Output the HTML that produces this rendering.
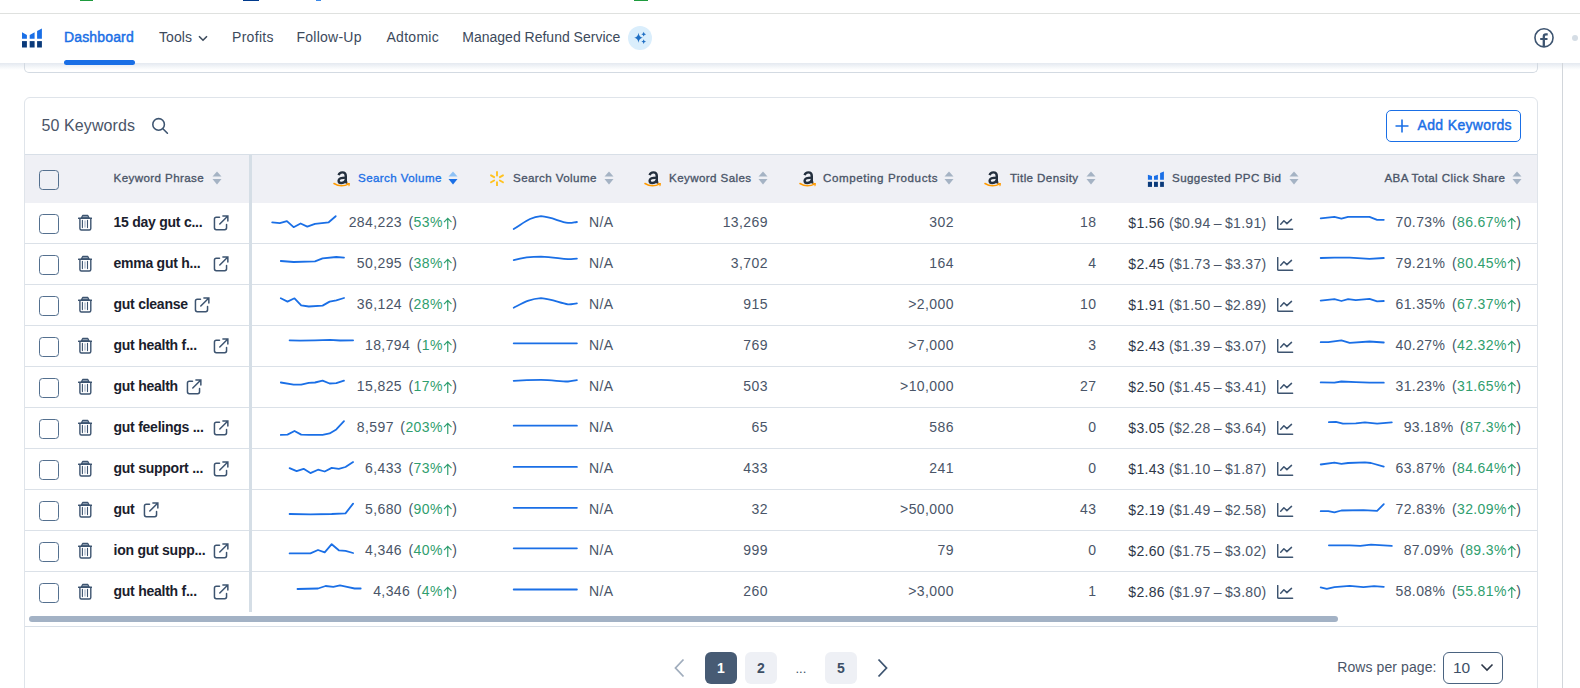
<!DOCTYPE html>
<html><head><meta charset="utf-8"><style>
html,body{margin:0;padding:0;background:#fff;}
body{width:1580px;height:688px;overflow:hidden;position:relative;font-family:"Liberation Sans", sans-serif;}
.t{position:absolute;white-space:nowrap;}
.a{position:absolute;}
</style></head><body>

<div class="a" style="left:0;top:13px;width:1580px;height:1px;background:#dfe1df"></div>
<div class="a" style="left:80px;top:0;width:13px;height:1px;background:#1e9b3e"></div>
<div class="a" style="left:243px;top:0;width:16px;height:1px;background:#003a8c"></div>
<div class="a" style="left:316px;top:0;width:5px;height:1px;background:#3a88e8"></div>
<div class="a" style="left:634px;top:0;width:14px;height:1px;background:#1e9b3e"></div>
<div class="a" style="left:0;top:63px;width:1580px;height:7px;background:linear-gradient(#e4e9f0,#f7f9fb 70%,#fff)"></div>
<div class="a" style="left:24px;top:56px;width:1512px;height:16px;border:1px solid #d3dae2;border-top:none;border-radius:0 0 5px 5px"></div>
<div class="a" style="left:0;top:14px;width:1580px;height:49px;background:#fff"></div>
<div class="a" style="left:1562px;top:63px;width:1px;height:625px;background:#d2d6db"></div>
<svg class="a" style="left:22px;top:28px" width="21" height="20" viewBox="0 0 21 20">
<path d="M0,4.2 L4.9,7 L4.9,10.8 L0,10.8Z M7.7,7 L12.6,4.2 L12.6,10.8 L7.7,10.8Z M15.1,2.9 L19.9,0.6 L19.9,10.8 L15.1,10.8Z" fill="#1a6fe6"/>
<rect x="0" y="13.1" width="4.9" height="6.4" fill="#0a3a7a"/><rect x="7.7" y="13.1" width="4.9" height="6.4" fill="#0a3a7a"/><rect x="15.1" y="13.1" width="4.8" height="6.4" fill="#0a3a7a"/>
</svg>
<div class="t" style="left:64px;top:30.35px;font-size:14px;line-height:14px;color:#1a6fe6;font-weight:400;letter-spacing:0.15px;-webkit-text-stroke:0.45px #1a6fe6;">Dashboard</div>
<div class="a" style="left:64px;top:60px;width:71px;height:5px;border-radius:3px;background:#1a6fe6"></div>
<div class="t" style="left:159px;top:30.35px;font-size:14px;line-height:14px;color:#3c4a5c;font-weight:400;letter-spacing:0.1px;">Tools</div>
<svg class="a" style="left:198px;top:35px" width="10" height="7" viewBox="0 0 10 7"><path d="M1,1.2 L5,5.2 L9,1.2" fill="none" stroke="#3c4a5c" stroke-width="1.6"/></svg>
<div class="t" style="left:232px;top:30.35px;font-size:14px;line-height:14px;color:#3c4a5c;font-weight:400;letter-spacing:0.3px;">Profits</div>
<div class="t" style="left:296.5px;top:30.35px;font-size:14px;line-height:14px;color:#3c4a5c;font-weight:400;letter-spacing:0.25px;">Follow-Up</div>
<div class="t" style="left:386.5px;top:30.35px;font-size:14px;line-height:14px;color:#3c4a5c;font-weight:400;letter-spacing:0.28px;">Adtomic</div>
<div class="t" style="left:462.3px;top:30.35px;font-size:14px;line-height:14px;color:#3c4a5c;font-weight:400;">Managed Refund Service</div>
<div class="a" style="left:628px;top:26px;width:24px;height:24px;border-radius:12px;background:#daeefc"></div>
<svg class="a" style="left:628px;top:26px" width="24" height="24" viewBox="0 0 24 24">
<path d="M10.5,6.8 Q11.1,11.1 14.8,11.8 Q11.1,12.5 10.5,16.8 Q9.9,12.5 6.2,11.8 Q9.9,11.1 10.5,6.8Z" fill="#1f6fc4"/>
<path d="M15.7,5.8 Q16,7.9 18.1,8.2 Q16,8.5 15.7,10.6 Q15.4,8.5 13.3,8.2 Q15.4,7.9 15.7,5.8Z" fill="#1f6fc4"/>
<path d="M15.7,13.2 Q16,15.3 18.1,15.6 Q16,15.9 15.7,18 Q15.4,15.9 13.3,15.6 Q15.4,15.3 15.7,13.2Z" fill="#1f6fc4"/>
</svg>
<svg class="a" style="left:1533px;top:27px" width="22" height="22" viewBox="0 0 22 22">
<circle cx="11" cy="10.8" r="9.05" fill="none" stroke="#3d5470" stroke-width="1.6"/>
<path d="M10.8,20 L10.8,9.4 Q10.8,7.3 12.9,7.3 L14.7,7.3" fill="none" stroke="#3d5470" stroke-width="2.3"/>
<path d="M7.2,12 L14.5,12" stroke="#3d5470" stroke-width="2"/>
</svg>
<div class="a" style="left:1572px;top:35px;width:6px;height:6px;border-radius:3px;background:#d5dde5"></div>
<div class="a" style="left:24px;top:97px;width:1512px;height:620px;border:1px solid #dfe4ea;border-radius:6px"></div>
<div class="t" style="left:41.5px;top:118.26px;font-size:16px;line-height:16px;color:#4a5568;font-weight:400;letter-spacing:0.1px;">50 Keywords</div>
<svg class="a" style="left:150px;top:116px" width="20" height="20" viewBox="0 0 20 20">
<circle cx="8.6" cy="8.4" r="5.8" fill="none" stroke="#3d5470" stroke-width="1.55"/>
<path d="M12.9,12.7 L17.4,17.2" stroke="#3d5470" stroke-width="1.6" stroke-linecap="round"/>
</svg>
<div class="a" style="left:1386px;top:110px;width:133px;height:30px;border:1px solid #1a6fe6;border-radius:5px"></div>
<svg class="a" style="left:1395px;top:119px" width="14" height="14" viewBox="0 0 14 14"><path d="M7,0.5 L7,13.5 M0.5,7 L13.5,7" stroke="#1a6fe6" stroke-width="1.6"/></svg>
<div class="t" style="left:1417.5px;top:118.05px;font-size:14px;line-height:14px;color:#1a6fe6;font-weight:400;letter-spacing:0.35px;-webkit-text-stroke:0.45px currentColor;">Add Keywords</div>
<div class="a" style="left:25px;top:154px;width:1512px;height:1px;background:#d8dfe7"></div>
<div class="a" style="left:25px;top:155px;width:1512px;height:48px;background:#eff0f5"></div>
<div class="a" style="left:25px;top:243px;width:1512px;height:1px;background:#dbe1e8"></div>
<div class="a" style="left:25px;top:284px;width:1512px;height:1px;background:#dbe1e8"></div>
<div class="a" style="left:25px;top:325px;width:1512px;height:1px;background:#dbe1e8"></div>
<div class="a" style="left:25px;top:366px;width:1512px;height:1px;background:#dbe1e8"></div>
<div class="a" style="left:25px;top:407px;width:1512px;height:1px;background:#dbe1e8"></div>
<div class="a" style="left:25px;top:448px;width:1512px;height:1px;background:#dbe1e8"></div>
<div class="a" style="left:25px;top:489px;width:1512px;height:1px;background:#dbe1e8"></div>
<div class="a" style="left:25px;top:530px;width:1512px;height:1px;background:#dbe1e8"></div>
<div class="a" style="left:25px;top:571px;width:1512px;height:1px;background:#dbe1e8"></div>
<div class="a" style="left:249px;top:155px;width:3px;height:457px;background:#d5dee6"></div>
<div class="a" style="left:39px;top:170px;width:18px;height:18px;border:1.2px solid #54708f;border-radius:3.6px;box-sizing:content-box"></div>
<div class="t" style="left:113.5px;top:171.88px;font-size:11.6px;line-height:11.6px;color:#4a5568;font-weight:400;letter-spacing:0.4px;-webkit-text-stroke:0.32px currentColor;">Keyword Phrase</div>
<svg class="a" style="left:212px;top:171px" width="10" height="14" viewBox="0 0 10 14"><path d="M5,0.5 L9.5,5.5 L0.5,5.5Z" fill="#a5b3c4"/><path d="M5,13.5 L9.5,8 L0.5,8Z" fill="#a5b3c4"/></svg>
<svg class="a" style="left:333px;top:170px" width="18" height="19" viewBox="0 0 18 19">
<g transform="translate(1,0)">
<path d="M4.6,5.2 Q5.4,2.4 8.4,2.4 Q11.8,2.4 11.8,5.9 L11.8,11.2 Q11.8,12.6 13.3,12.9" fill="none" stroke="#232f3e" stroke-width="2.4"/>
<path d="M11.8,7.6 Q4.6,7.6 4.6,10.7 Q4.6,13 7.2,13 Q10.2,13 11.8,10.4" fill="none" stroke="#232f3e" stroke-width="2.4"/>
</g>
<path d="M1,13.5 Q8,18 16,13.8" fill="none" stroke="#ff9a00" stroke-width="1.5" stroke-linecap="round"/>
<path d="M14,13.3 L16.3,13.6 L16,15.8" fill="none" stroke="#ff9a00" stroke-width="1.1" stroke-linecap="round"/>
</svg>
<div class="t" style="left:358px;top:171.88px;font-size:11.6px;line-height:11.6px;color:#1a6fe6;font-weight:400;letter-spacing:0.4px;-webkit-text-stroke:0.32px currentColor;">Search Volume</div>
<svg class="a" style="left:448px;top:171px" width="10" height="14" viewBox="0 0 10 14"><path d="M5,0.5 L9.5,5.5 L0.5,5.5Z" fill="#8ec1f5"/><path d="M5,13.5 L9.5,8 L0.5,8Z" fill="#1a6fe6"/></svg>
<svg class="a" style="left:489px;top:170px" width="16" height="16" viewBox="0 0 16 16">
<g stroke="#ffc220" stroke-width="1.9" stroke-linecap="round">
<path d="M8,1.9 L8,5.5"/><path d="M8,12.1 L8,15.7"/>
<path d="M2.02,5.35 L5.14,7.15"/><path d="M10.86,10.45 L13.98,12.25"/>
<path d="M2.02,12.25 L5.14,10.45"/><path d="M10.86,7.15 L13.98,5.35"/>
</g></svg>
<div class="t" style="left:513px;top:171.88px;font-size:11.6px;line-height:11.6px;color:#4a5568;font-weight:400;letter-spacing:0.4px;-webkit-text-stroke:0.32px currentColor;">Search Volume</div>
<svg class="a" style="left:604px;top:171px" width="10" height="14" viewBox="0 0 10 14"><path d="M5,0.5 L9.5,5.5 L0.5,5.5Z" fill="#a5b3c4"/><path d="M5,13.5 L9.5,8 L0.5,8Z" fill="#a5b3c4"/></svg>
<svg class="a" style="left:644px;top:170px" width="18" height="19" viewBox="0 0 18 19">
<g transform="translate(1,0)">
<path d="M4.6,5.2 Q5.4,2.4 8.4,2.4 Q11.8,2.4 11.8,5.9 L11.8,11.2 Q11.8,12.6 13.3,12.9" fill="none" stroke="#232f3e" stroke-width="2.4"/>
<path d="M11.8,7.6 Q4.6,7.6 4.6,10.7 Q4.6,13 7.2,13 Q10.2,13 11.8,10.4" fill="none" stroke="#232f3e" stroke-width="2.4"/>
</g>
<path d="M1,13.5 Q8,18 16,13.8" fill="none" stroke="#ff9a00" stroke-width="1.5" stroke-linecap="round"/>
<path d="M14,13.3 L16.3,13.6 L16,15.8" fill="none" stroke="#ff9a00" stroke-width="1.1" stroke-linecap="round"/>
</svg>
<div class="t" style="left:669px;top:171.88px;font-size:11.6px;line-height:11.6px;color:#4a5568;font-weight:400;letter-spacing:0.4px;-webkit-text-stroke:0.32px currentColor;">Keyword Sales</div>
<svg class="a" style="left:758px;top:171px" width="10" height="14" viewBox="0 0 10 14"><path d="M5,0.5 L9.5,5.5 L0.5,5.5Z" fill="#a5b3c4"/><path d="M5,13.5 L9.5,8 L0.5,8Z" fill="#a5b3c4"/></svg>
<svg class="a" style="left:799px;top:170px" width="18" height="19" viewBox="0 0 18 19">
<g transform="translate(1,0)">
<path d="M4.6,5.2 Q5.4,2.4 8.4,2.4 Q11.8,2.4 11.8,5.9 L11.8,11.2 Q11.8,12.6 13.3,12.9" fill="none" stroke="#232f3e" stroke-width="2.4"/>
<path d="M11.8,7.6 Q4.6,7.6 4.6,10.7 Q4.6,13 7.2,13 Q10.2,13 11.8,10.4" fill="none" stroke="#232f3e" stroke-width="2.4"/>
</g>
<path d="M1,13.5 Q8,18 16,13.8" fill="none" stroke="#ff9a00" stroke-width="1.5" stroke-linecap="round"/>
<path d="M14,13.3 L16.3,13.6 L16,15.8" fill="none" stroke="#ff9a00" stroke-width="1.1" stroke-linecap="round"/>
</svg>
<div class="t" style="left:823px;top:171.88px;font-size:11.6px;line-height:11.6px;color:#4a5568;font-weight:400;letter-spacing:0.56px;-webkit-text-stroke:0.32px currentColor;">Competing Products</div>
<svg class="a" style="left:944px;top:171px" width="10" height="14" viewBox="0 0 10 14"><path d="M5,0.5 L9.5,5.5 L0.5,5.5Z" fill="#a5b3c4"/><path d="M5,13.5 L9.5,8 L0.5,8Z" fill="#a5b3c4"/></svg>
<svg class="a" style="left:984px;top:170px" width="18" height="19" viewBox="0 0 18 19">
<g transform="translate(1,0)">
<path d="M4.6,5.2 Q5.4,2.4 8.4,2.4 Q11.8,2.4 11.8,5.9 L11.8,11.2 Q11.8,12.6 13.3,12.9" fill="none" stroke="#232f3e" stroke-width="2.4"/>
<path d="M11.8,7.6 Q4.6,7.6 4.6,10.7 Q4.6,13 7.2,13 Q10.2,13 11.8,10.4" fill="none" stroke="#232f3e" stroke-width="2.4"/>
</g>
<path d="M1,13.5 Q8,18 16,13.8" fill="none" stroke="#ff9a00" stroke-width="1.5" stroke-linecap="round"/>
<path d="M14,13.3 L16.3,13.6 L16,15.8" fill="none" stroke="#ff9a00" stroke-width="1.1" stroke-linecap="round"/>
</svg>
<div class="t" style="left:1010px;top:171.88px;font-size:11.6px;line-height:11.6px;color:#4a5568;font-weight:400;letter-spacing:0.4px;-webkit-text-stroke:0.32px currentColor;">Title Density</div>
<svg class="a" style="left:1086px;top:171px" width="10" height="14" viewBox="0 0 10 14"><path d="M5,0.5 L9.5,5.5 L0.5,5.5Z" fill="#a5b3c4"/><path d="M5,13.5 L9.5,8 L0.5,8Z" fill="#a5b3c4"/></svg>
<svg class="a" style="left:1147px;top:171px" width="18" height="17" viewBox="0 0 18 17">
<path d="M0.9,3.8 L5,5.1 L5,8.7 L0.9,8.7Z M7,5.1 L10.9,3.8 L10.9,8.7 L7,8.7Z M13.1,2.1 L16.9,0.6 L16.9,8.7 L13.1,8.7Z" fill="#1a6fe6"/>
<rect x="0.9" y="10.8" width="4.1" height="5.1" fill="#0a3a7a"/><rect x="7" y="10.8" width="3.9" height="5.1" fill="#0a3a7a"/><rect x="13.1" y="10.8" width="3.8" height="5.1" fill="#0a3a7a"/>
</svg>
<div class="t" style="left:1172px;top:171.88px;font-size:11.6px;line-height:11.6px;color:#4a5568;font-weight:400;letter-spacing:0.4px;-webkit-text-stroke:0.32px currentColor;">Suggested PPC Bid</div>
<svg class="a" style="left:1289px;top:171px" width="10" height="14" viewBox="0 0 10 14"><path d="M5,0.5 L9.5,5.5 L0.5,5.5Z" fill="#a5b3c4"/><path d="M5,13.5 L9.5,8 L0.5,8Z" fill="#a5b3c4"/></svg>
<div class="t" style="right:74.59999999999991px;text-align:right;top:171.88px;font-size:11.6px;line-height:11.6px;color:#4a5568;font-weight:400;letter-spacing:0.4px;-webkit-text-stroke:0.32px currentColor;">ABA Total Click Share</div>
<svg class="a" style="left:1512px;top:171px" width="10" height="14" viewBox="0 0 10 14"><path d="M5,0.5 L9.5,5.5 L0.5,5.5Z" fill="#a5b3c4"/><path d="M5,13.5 L9.5,8 L0.5,8Z" fill="#a5b3c4"/></svg>
<div class="a" style="left:39px;top:214px;width:18px;height:18px;border:1.2px solid #54708f;border-radius:3.6px;box-sizing:content-box"></div>
<svg class="a" style="left:78px;top:214px" width="14" height="18" viewBox="0 0 14 18">
<path d="M3.3,4 L4.7,1.5 L9.8,1.5 L11.1,4Z" fill="#a9b6c6" stroke="#3d5470" stroke-width="1.3" stroke-linejoin="round"/>
<path d="M0.6,4.3 L13.6,4.3" stroke="#3d5470" stroke-width="1.5" stroke-linecap="round"/>
<path d="M1.9,4.6 L1.9,14.5 Q1.9,16 3.4,16 L11.3,16 Q12.8,16 12.8,14.5 L12.8,4.6" fill="none" stroke="#3d5470" stroke-width="1.4"/>
<path d="M4.4,6.3 L4.4,13.6 M9.5,6.3 L9.5,13.6" stroke="#3d5470" stroke-width="1.1" stroke-linecap="round"/>
<path d="M7,6.4 L7,13.6" stroke="#a9b6c6" stroke-width="1.2"/>
</svg>
<div class="t" style="left:113.5px;top:215.15px;font-size:14px;line-height:14px;color:#1a202c;font-weight:700;letter-spacing:-0.25px;">15 day gut c...</div>
<svg class="a" style="left:213px;top:215px" width="17" height="17" viewBox="0 0 17 17">
<path d="M6.5,2.15 L3.3,2.15 Q1.45,2.15 1.45,4 L1.45,12.8 Q1.45,14.65 3.3,14.65 L11.7,14.65 Q13.55,14.65 13.55,12.8 L13.55,9.5" fill="none" stroke="#3d5470" stroke-width="1.5" stroke-linecap="round"/>
<path d="M9.9,1.05 L14.85,1.05 L14.85,6 M14.6,1.3 L6.8,9.0" fill="none" stroke="#3d5470" stroke-width="1.5" stroke-linecap="round"/>
</svg>
<div class="t" style="right:1122.6px;text-align:right;top:215.15px;font-size:14px;line-height:14px;color:#4a5568;font-weight:400;letter-spacing:0.4px;">284,223<span style="display:inline-block;width:6.5px"></span><span style="color:#4a5568">(</span><span style="color:#2f9e6e">53%</span><svg width="9.5" height="12" viewBox="0 0 9.5 12" style="vertical-align:-1.5px"><path d="M4.75,1.3 L4.75,11.9 M1,5.1 L4.75,1.3 L8.5,5.1" fill="none" stroke="#2f9e6e" stroke-width="1.2"/></svg><span style="color:#4a5568">)</span></div>
<div class="t" style="left:589px;top:215.15px;font-size:14px;line-height:14px;color:#4a5568;font-weight:400;letter-spacing:0.4px;">N/A</div>
<div class="t" style="right:812.1px;text-align:right;top:215.15px;font-size:14px;line-height:14px;color:#4a5568;font-weight:400;letter-spacing:0.4px;">13,269</div>
<div class="t" style="right:626.1px;text-align:right;top:215.15px;font-size:14px;line-height:14px;color:#4a5568;font-weight:400;letter-spacing:0.4px;">302</div>
<div class="t" style="right:483.5999999999999px;text-align:right;top:215.15px;font-size:14px;line-height:14px;color:#4a5568;font-weight:400;letter-spacing:0.4px;">18</div>
<div class="t" style="left:1128.3px;top:215.95px;font-size:14px;line-height:14px;color:#4a5568;font-weight:400;letter-spacing:0.3px;"><span style="color:#2d3748">$1.56</span> <span style="word-spacing:-1px">($0.94 – $1.91)</span></div>
<svg class="a" style="left:1277px;top:216px" width="17" height="15" viewBox="0 0 17 15">
<path d="M0.7,0.6 L0.7,12.2 Q0.7,13.3 1.8,13.3 L15.6,13.3" fill="none" stroke="#3d5470" stroke-width="1.5" stroke-linecap="round"/>
<path d="M3.7,8.2 L6.9,4.8 L9.9,7.6 L14.5,3.4" fill="none" stroke="#3d5470" stroke-width="1.5" stroke-linecap="round" stroke-linejoin="round"/>
</svg>
<div class="t" style="right:58.59999999999991px;text-align:right;top:215.15px;font-size:14px;line-height:14px;color:#4a5568;font-weight:400;letter-spacing:0.4px;">70.73%<span style="display:inline-block;width:6.5px"></span><span style="color:#4a5568">(</span><span style="color:#2f9e6e">86.67%</span><svg width="9.5" height="12" viewBox="0 0 9.5 12" style="vertical-align:-1.5px"><path d="M4.75,1.3 L4.75,11.9 M1,5.1 L4.75,1.3 L8.5,5.1" fill="none" stroke="#2f9e6e" stroke-width="1.2"/></svg><span style="color:#4a5568">)</span></div>
<div class="a" style="left:39px;top:255px;width:18px;height:18px;border:1.2px solid #54708f;border-radius:3.6px;box-sizing:content-box"></div>
<svg class="a" style="left:78px;top:255px" width="14" height="18" viewBox="0 0 14 18">
<path d="M3.3,4 L4.7,1.5 L9.8,1.5 L11.1,4Z" fill="#a9b6c6" stroke="#3d5470" stroke-width="1.3" stroke-linejoin="round"/>
<path d="M0.6,4.3 L13.6,4.3" stroke="#3d5470" stroke-width="1.5" stroke-linecap="round"/>
<path d="M1.9,4.6 L1.9,14.5 Q1.9,16 3.4,16 L11.3,16 Q12.8,16 12.8,14.5 L12.8,4.6" fill="none" stroke="#3d5470" stroke-width="1.4"/>
<path d="M4.4,6.3 L4.4,13.6 M9.5,6.3 L9.5,13.6" stroke="#3d5470" stroke-width="1.1" stroke-linecap="round"/>
<path d="M7,6.4 L7,13.6" stroke="#a9b6c6" stroke-width="1.2"/>
</svg>
<div class="t" style="left:113.5px;top:256.15px;font-size:14px;line-height:14px;color:#1a202c;font-weight:700;letter-spacing:-0.25px;">emma gut h...</div>
<svg class="a" style="left:213px;top:256px" width="17" height="17" viewBox="0 0 17 17">
<path d="M6.5,2.15 L3.3,2.15 Q1.45,2.15 1.45,4 L1.45,12.8 Q1.45,14.65 3.3,14.65 L11.7,14.65 Q13.55,14.65 13.55,12.8 L13.55,9.5" fill="none" stroke="#3d5470" stroke-width="1.5" stroke-linecap="round"/>
<path d="M9.9,1.05 L14.85,1.05 L14.85,6 M14.6,1.3 L6.8,9.0" fill="none" stroke="#3d5470" stroke-width="1.5" stroke-linecap="round"/>
</svg>
<div class="t" style="right:1122.6px;text-align:right;top:256.15px;font-size:14px;line-height:14px;color:#4a5568;font-weight:400;letter-spacing:0.4px;">50,295<span style="display:inline-block;width:6.5px"></span><span style="color:#4a5568">(</span><span style="color:#2f9e6e">38%</span><svg width="9.5" height="12" viewBox="0 0 9.5 12" style="vertical-align:-1.5px"><path d="M4.75,1.3 L4.75,11.9 M1,5.1 L4.75,1.3 L8.5,5.1" fill="none" stroke="#2f9e6e" stroke-width="1.2"/></svg><span style="color:#4a5568">)</span></div>
<div class="t" style="left:589px;top:256.15px;font-size:14px;line-height:14px;color:#4a5568;font-weight:400;letter-spacing:0.4px;">N/A</div>
<div class="t" style="right:812.1px;text-align:right;top:256.15px;font-size:14px;line-height:14px;color:#4a5568;font-weight:400;letter-spacing:0.4px;">3,702</div>
<div class="t" style="right:626.1px;text-align:right;top:256.15px;font-size:14px;line-height:14px;color:#4a5568;font-weight:400;letter-spacing:0.4px;">164</div>
<div class="t" style="right:483.5999999999999px;text-align:right;top:256.15px;font-size:14px;line-height:14px;color:#4a5568;font-weight:400;letter-spacing:0.4px;">4</div>
<div class="t" style="left:1128.3px;top:256.95px;font-size:14px;line-height:14px;color:#4a5568;font-weight:400;letter-spacing:0.3px;"><span style="color:#2d3748">$2.45</span> <span style="word-spacing:-1px">($1.73 – $3.37)</span></div>
<svg class="a" style="left:1277px;top:257px" width="17" height="15" viewBox="0 0 17 15">
<path d="M0.7,0.6 L0.7,12.2 Q0.7,13.3 1.8,13.3 L15.6,13.3" fill="none" stroke="#3d5470" stroke-width="1.5" stroke-linecap="round"/>
<path d="M3.7,8.2 L6.9,4.8 L9.9,7.6 L14.5,3.4" fill="none" stroke="#3d5470" stroke-width="1.5" stroke-linecap="round" stroke-linejoin="round"/>
</svg>
<div class="t" style="right:58.59999999999991px;text-align:right;top:256.15px;font-size:14px;line-height:14px;color:#4a5568;font-weight:400;letter-spacing:0.4px;">79.21%<span style="display:inline-block;width:6.5px"></span><span style="color:#4a5568">(</span><span style="color:#2f9e6e">80.45%</span><svg width="9.5" height="12" viewBox="0 0 9.5 12" style="vertical-align:-1.5px"><path d="M4.75,1.3 L4.75,11.9 M1,5.1 L4.75,1.3 L8.5,5.1" fill="none" stroke="#2f9e6e" stroke-width="1.2"/></svg><span style="color:#4a5568">)</span></div>
<div class="a" style="left:39px;top:296px;width:18px;height:18px;border:1.2px solid #54708f;border-radius:3.6px;box-sizing:content-box"></div>
<svg class="a" style="left:78px;top:296px" width="14" height="18" viewBox="0 0 14 18">
<path d="M3.3,4 L4.7,1.5 L9.8,1.5 L11.1,4Z" fill="#a9b6c6" stroke="#3d5470" stroke-width="1.3" stroke-linejoin="round"/>
<path d="M0.6,4.3 L13.6,4.3" stroke="#3d5470" stroke-width="1.5" stroke-linecap="round"/>
<path d="M1.9,4.6 L1.9,14.5 Q1.9,16 3.4,16 L11.3,16 Q12.8,16 12.8,14.5 L12.8,4.6" fill="none" stroke="#3d5470" stroke-width="1.4"/>
<path d="M4.4,6.3 L4.4,13.6 M9.5,6.3 L9.5,13.6" stroke="#3d5470" stroke-width="1.1" stroke-linecap="round"/>
<path d="M7,6.4 L7,13.6" stroke="#a9b6c6" stroke-width="1.2"/>
</svg>
<div class="t" style="left:113.5px;top:297.15px;font-size:14px;line-height:14px;color:#1a202c;font-weight:700;letter-spacing:-0.25px;">gut cleanse</div>
<svg class="a" style="left:194px;top:297px" width="17" height="17" viewBox="0 0 17 17">
<path d="M6.5,2.15 L3.3,2.15 Q1.45,2.15 1.45,4 L1.45,12.8 Q1.45,14.65 3.3,14.65 L11.7,14.65 Q13.55,14.65 13.55,12.8 L13.55,9.5" fill="none" stroke="#3d5470" stroke-width="1.5" stroke-linecap="round"/>
<path d="M9.9,1.05 L14.85,1.05 L14.85,6 M14.6,1.3 L6.8,9.0" fill="none" stroke="#3d5470" stroke-width="1.5" stroke-linecap="round"/>
</svg>
<div class="t" style="right:1122.6px;text-align:right;top:297.15px;font-size:14px;line-height:14px;color:#4a5568;font-weight:400;letter-spacing:0.4px;">36,124<span style="display:inline-block;width:6.5px"></span><span style="color:#4a5568">(</span><span style="color:#2f9e6e">28%</span><svg width="9.5" height="12" viewBox="0 0 9.5 12" style="vertical-align:-1.5px"><path d="M4.75,1.3 L4.75,11.9 M1,5.1 L4.75,1.3 L8.5,5.1" fill="none" stroke="#2f9e6e" stroke-width="1.2"/></svg><span style="color:#4a5568">)</span></div>
<div class="t" style="left:589px;top:297.15px;font-size:14px;line-height:14px;color:#4a5568;font-weight:400;letter-spacing:0.4px;">N/A</div>
<div class="t" style="right:812.1px;text-align:right;top:297.15px;font-size:14px;line-height:14px;color:#4a5568;font-weight:400;letter-spacing:0.4px;">915</div>
<div class="t" style="right:626.1px;text-align:right;top:297.15px;font-size:14px;line-height:14px;color:#4a5568;font-weight:400;letter-spacing:0.4px;">&gt;2,000</div>
<div class="t" style="right:483.5999999999999px;text-align:right;top:297.15px;font-size:14px;line-height:14px;color:#4a5568;font-weight:400;letter-spacing:0.4px;">10</div>
<div class="t" style="left:1128.3px;top:297.95px;font-size:14px;line-height:14px;color:#4a5568;font-weight:400;letter-spacing:0.3px;"><span style="color:#2d3748">$1.91</span> <span style="word-spacing:-1px">($1.50 – $2.89)</span></div>
<svg class="a" style="left:1277px;top:298px" width="17" height="15" viewBox="0 0 17 15">
<path d="M0.7,0.6 L0.7,12.2 Q0.7,13.3 1.8,13.3 L15.6,13.3" fill="none" stroke="#3d5470" stroke-width="1.5" stroke-linecap="round"/>
<path d="M3.7,8.2 L6.9,4.8 L9.9,7.6 L14.5,3.4" fill="none" stroke="#3d5470" stroke-width="1.5" stroke-linecap="round" stroke-linejoin="round"/>
</svg>
<div class="t" style="right:58.59999999999991px;text-align:right;top:297.15px;font-size:14px;line-height:14px;color:#4a5568;font-weight:400;letter-spacing:0.4px;">61.35%<span style="display:inline-block;width:6.5px"></span><span style="color:#4a5568">(</span><span style="color:#2f9e6e">67.37%</span><svg width="9.5" height="12" viewBox="0 0 9.5 12" style="vertical-align:-1.5px"><path d="M4.75,1.3 L4.75,11.9 M1,5.1 L4.75,1.3 L8.5,5.1" fill="none" stroke="#2f9e6e" stroke-width="1.2"/></svg><span style="color:#4a5568">)</span></div>
<div class="a" style="left:39px;top:337px;width:18px;height:18px;border:1.2px solid #54708f;border-radius:3.6px;box-sizing:content-box"></div>
<svg class="a" style="left:78px;top:337px" width="14" height="18" viewBox="0 0 14 18">
<path d="M3.3,4 L4.7,1.5 L9.8,1.5 L11.1,4Z" fill="#a9b6c6" stroke="#3d5470" stroke-width="1.3" stroke-linejoin="round"/>
<path d="M0.6,4.3 L13.6,4.3" stroke="#3d5470" stroke-width="1.5" stroke-linecap="round"/>
<path d="M1.9,4.6 L1.9,14.5 Q1.9,16 3.4,16 L11.3,16 Q12.8,16 12.8,14.5 L12.8,4.6" fill="none" stroke="#3d5470" stroke-width="1.4"/>
<path d="M4.4,6.3 L4.4,13.6 M9.5,6.3 L9.5,13.6" stroke="#3d5470" stroke-width="1.1" stroke-linecap="round"/>
<path d="M7,6.4 L7,13.6" stroke="#a9b6c6" stroke-width="1.2"/>
</svg>
<div class="t" style="left:113.5px;top:338.15px;font-size:14px;line-height:14px;color:#1a202c;font-weight:700;letter-spacing:-0.25px;">gut health f...</div>
<svg class="a" style="left:213px;top:338px" width="17" height="17" viewBox="0 0 17 17">
<path d="M6.5,2.15 L3.3,2.15 Q1.45,2.15 1.45,4 L1.45,12.8 Q1.45,14.65 3.3,14.65 L11.7,14.65 Q13.55,14.65 13.55,12.8 L13.55,9.5" fill="none" stroke="#3d5470" stroke-width="1.5" stroke-linecap="round"/>
<path d="M9.9,1.05 L14.85,1.05 L14.85,6 M14.6,1.3 L6.8,9.0" fill="none" stroke="#3d5470" stroke-width="1.5" stroke-linecap="round"/>
</svg>
<div class="t" style="right:1122.6px;text-align:right;top:338.15px;font-size:14px;line-height:14px;color:#4a5568;font-weight:400;letter-spacing:0.4px;">18,794<span style="display:inline-block;width:6.5px"></span><span style="color:#4a5568">(</span><span style="color:#2f9e6e">1%</span><svg width="9.5" height="12" viewBox="0 0 9.5 12" style="vertical-align:-1.5px"><path d="M4.75,1.3 L4.75,11.9 M1,5.1 L4.75,1.3 L8.5,5.1" fill="none" stroke="#2f9e6e" stroke-width="1.2"/></svg><span style="color:#4a5568">)</span></div>
<div class="t" style="left:589px;top:338.15px;font-size:14px;line-height:14px;color:#4a5568;font-weight:400;letter-spacing:0.4px;">N/A</div>
<div class="t" style="right:812.1px;text-align:right;top:338.15px;font-size:14px;line-height:14px;color:#4a5568;font-weight:400;letter-spacing:0.4px;">769</div>
<div class="t" style="right:626.1px;text-align:right;top:338.15px;font-size:14px;line-height:14px;color:#4a5568;font-weight:400;letter-spacing:0.4px;">&gt;7,000</div>
<div class="t" style="right:483.5999999999999px;text-align:right;top:338.15px;font-size:14px;line-height:14px;color:#4a5568;font-weight:400;letter-spacing:0.4px;">3</div>
<div class="t" style="left:1128.3px;top:338.95px;font-size:14px;line-height:14px;color:#4a5568;font-weight:400;letter-spacing:0.3px;"><span style="color:#2d3748">$2.43</span> <span style="word-spacing:-1px">($1.39 – $3.07)</span></div>
<svg class="a" style="left:1277px;top:339px" width="17" height="15" viewBox="0 0 17 15">
<path d="M0.7,0.6 L0.7,12.2 Q0.7,13.3 1.8,13.3 L15.6,13.3" fill="none" stroke="#3d5470" stroke-width="1.5" stroke-linecap="round"/>
<path d="M3.7,8.2 L6.9,4.8 L9.9,7.6 L14.5,3.4" fill="none" stroke="#3d5470" stroke-width="1.5" stroke-linecap="round" stroke-linejoin="round"/>
</svg>
<div class="t" style="right:58.59999999999991px;text-align:right;top:338.15px;font-size:14px;line-height:14px;color:#4a5568;font-weight:400;letter-spacing:0.4px;">40.27%<span style="display:inline-block;width:6.5px"></span><span style="color:#4a5568">(</span><span style="color:#2f9e6e">42.32%</span><svg width="9.5" height="12" viewBox="0 0 9.5 12" style="vertical-align:-1.5px"><path d="M4.75,1.3 L4.75,11.9 M1,5.1 L4.75,1.3 L8.5,5.1" fill="none" stroke="#2f9e6e" stroke-width="1.2"/></svg><span style="color:#4a5568">)</span></div>
<div class="a" style="left:39px;top:378px;width:18px;height:18px;border:1.2px solid #54708f;border-radius:3.6px;box-sizing:content-box"></div>
<svg class="a" style="left:78px;top:378px" width="14" height="18" viewBox="0 0 14 18">
<path d="M3.3,4 L4.7,1.5 L9.8,1.5 L11.1,4Z" fill="#a9b6c6" stroke="#3d5470" stroke-width="1.3" stroke-linejoin="round"/>
<path d="M0.6,4.3 L13.6,4.3" stroke="#3d5470" stroke-width="1.5" stroke-linecap="round"/>
<path d="M1.9,4.6 L1.9,14.5 Q1.9,16 3.4,16 L11.3,16 Q12.8,16 12.8,14.5 L12.8,4.6" fill="none" stroke="#3d5470" stroke-width="1.4"/>
<path d="M4.4,6.3 L4.4,13.6 M9.5,6.3 L9.5,13.6" stroke="#3d5470" stroke-width="1.1" stroke-linecap="round"/>
<path d="M7,6.4 L7,13.6" stroke="#a9b6c6" stroke-width="1.2"/>
</svg>
<div class="t" style="left:113.5px;top:379.15px;font-size:14px;line-height:14px;color:#1a202c;font-weight:700;letter-spacing:-0.25px;">gut health</div>
<svg class="a" style="left:186px;top:379px" width="17" height="17" viewBox="0 0 17 17">
<path d="M6.5,2.15 L3.3,2.15 Q1.45,2.15 1.45,4 L1.45,12.8 Q1.45,14.65 3.3,14.65 L11.7,14.65 Q13.55,14.65 13.55,12.8 L13.55,9.5" fill="none" stroke="#3d5470" stroke-width="1.5" stroke-linecap="round"/>
<path d="M9.9,1.05 L14.85,1.05 L14.85,6 M14.6,1.3 L6.8,9.0" fill="none" stroke="#3d5470" stroke-width="1.5" stroke-linecap="round"/>
</svg>
<div class="t" style="right:1122.6px;text-align:right;top:379.15px;font-size:14px;line-height:14px;color:#4a5568;font-weight:400;letter-spacing:0.4px;">15,825<span style="display:inline-block;width:6.5px"></span><span style="color:#4a5568">(</span><span style="color:#2f9e6e">17%</span><svg width="9.5" height="12" viewBox="0 0 9.5 12" style="vertical-align:-1.5px"><path d="M4.75,1.3 L4.75,11.9 M1,5.1 L4.75,1.3 L8.5,5.1" fill="none" stroke="#2f9e6e" stroke-width="1.2"/></svg><span style="color:#4a5568">)</span></div>
<div class="t" style="left:589px;top:379.15px;font-size:14px;line-height:14px;color:#4a5568;font-weight:400;letter-spacing:0.4px;">N/A</div>
<div class="t" style="right:812.1px;text-align:right;top:379.15px;font-size:14px;line-height:14px;color:#4a5568;font-weight:400;letter-spacing:0.4px;">503</div>
<div class="t" style="right:626.1px;text-align:right;top:379.15px;font-size:14px;line-height:14px;color:#4a5568;font-weight:400;letter-spacing:0.4px;">&gt;10,000</div>
<div class="t" style="right:483.5999999999999px;text-align:right;top:379.15px;font-size:14px;line-height:14px;color:#4a5568;font-weight:400;letter-spacing:0.4px;">27</div>
<div class="t" style="left:1128.3px;top:379.95px;font-size:14px;line-height:14px;color:#4a5568;font-weight:400;letter-spacing:0.3px;"><span style="color:#2d3748">$2.50</span> <span style="word-spacing:-1px">($1.45 – $3.41)</span></div>
<svg class="a" style="left:1277px;top:380px" width="17" height="15" viewBox="0 0 17 15">
<path d="M0.7,0.6 L0.7,12.2 Q0.7,13.3 1.8,13.3 L15.6,13.3" fill="none" stroke="#3d5470" stroke-width="1.5" stroke-linecap="round"/>
<path d="M3.7,8.2 L6.9,4.8 L9.9,7.6 L14.5,3.4" fill="none" stroke="#3d5470" stroke-width="1.5" stroke-linecap="round" stroke-linejoin="round"/>
</svg>
<div class="t" style="right:58.59999999999991px;text-align:right;top:379.15px;font-size:14px;line-height:14px;color:#4a5568;font-weight:400;letter-spacing:0.4px;">31.23%<span style="display:inline-block;width:6.5px"></span><span style="color:#4a5568">(</span><span style="color:#2f9e6e">31.65%</span><svg width="9.5" height="12" viewBox="0 0 9.5 12" style="vertical-align:-1.5px"><path d="M4.75,1.3 L4.75,11.9 M1,5.1 L4.75,1.3 L8.5,5.1" fill="none" stroke="#2f9e6e" stroke-width="1.2"/></svg><span style="color:#4a5568">)</span></div>
<div class="a" style="left:39px;top:419px;width:18px;height:18px;border:1.2px solid #54708f;border-radius:3.6px;box-sizing:content-box"></div>
<svg class="a" style="left:78px;top:419px" width="14" height="18" viewBox="0 0 14 18">
<path d="M3.3,4 L4.7,1.5 L9.8,1.5 L11.1,4Z" fill="#a9b6c6" stroke="#3d5470" stroke-width="1.3" stroke-linejoin="round"/>
<path d="M0.6,4.3 L13.6,4.3" stroke="#3d5470" stroke-width="1.5" stroke-linecap="round"/>
<path d="M1.9,4.6 L1.9,14.5 Q1.9,16 3.4,16 L11.3,16 Q12.8,16 12.8,14.5 L12.8,4.6" fill="none" stroke="#3d5470" stroke-width="1.4"/>
<path d="M4.4,6.3 L4.4,13.6 M9.5,6.3 L9.5,13.6" stroke="#3d5470" stroke-width="1.1" stroke-linecap="round"/>
<path d="M7,6.4 L7,13.6" stroke="#a9b6c6" stroke-width="1.2"/>
</svg>
<div class="t" style="left:113.5px;top:420.15px;font-size:14px;line-height:14px;color:#1a202c;font-weight:700;letter-spacing:-0.25px;">gut feelings ...</div>
<svg class="a" style="left:213px;top:420px" width="17" height="17" viewBox="0 0 17 17">
<path d="M6.5,2.15 L3.3,2.15 Q1.45,2.15 1.45,4 L1.45,12.8 Q1.45,14.65 3.3,14.65 L11.7,14.65 Q13.55,14.65 13.55,12.8 L13.55,9.5" fill="none" stroke="#3d5470" stroke-width="1.5" stroke-linecap="round"/>
<path d="M9.9,1.05 L14.85,1.05 L14.85,6 M14.6,1.3 L6.8,9.0" fill="none" stroke="#3d5470" stroke-width="1.5" stroke-linecap="round"/>
</svg>
<div class="t" style="right:1122.6px;text-align:right;top:420.15px;font-size:14px;line-height:14px;color:#4a5568;font-weight:400;letter-spacing:0.4px;">8,597<span style="display:inline-block;width:6.5px"></span><span style="color:#4a5568">(</span><span style="color:#2f9e6e">203%</span><svg width="9.5" height="12" viewBox="0 0 9.5 12" style="vertical-align:-1.5px"><path d="M4.75,1.3 L4.75,11.9 M1,5.1 L4.75,1.3 L8.5,5.1" fill="none" stroke="#2f9e6e" stroke-width="1.2"/></svg><span style="color:#4a5568">)</span></div>
<div class="t" style="left:589px;top:420.15px;font-size:14px;line-height:14px;color:#4a5568;font-weight:400;letter-spacing:0.4px;">N/A</div>
<div class="t" style="right:812.1px;text-align:right;top:420.15px;font-size:14px;line-height:14px;color:#4a5568;font-weight:400;letter-spacing:0.4px;">65</div>
<div class="t" style="right:626.1px;text-align:right;top:420.15px;font-size:14px;line-height:14px;color:#4a5568;font-weight:400;letter-spacing:0.4px;">586</div>
<div class="t" style="right:483.5999999999999px;text-align:right;top:420.15px;font-size:14px;line-height:14px;color:#4a5568;font-weight:400;letter-spacing:0.4px;">0</div>
<div class="t" style="left:1128.3px;top:420.95px;font-size:14px;line-height:14px;color:#4a5568;font-weight:400;letter-spacing:0.3px;"><span style="color:#2d3748">$3.05</span> <span style="word-spacing:-1px">($2.28 – $3.64)</span></div>
<svg class="a" style="left:1277px;top:421px" width="17" height="15" viewBox="0 0 17 15">
<path d="M0.7,0.6 L0.7,12.2 Q0.7,13.3 1.8,13.3 L15.6,13.3" fill="none" stroke="#3d5470" stroke-width="1.5" stroke-linecap="round"/>
<path d="M3.7,8.2 L6.9,4.8 L9.9,7.6 L14.5,3.4" fill="none" stroke="#3d5470" stroke-width="1.5" stroke-linecap="round" stroke-linejoin="round"/>
</svg>
<div class="t" style="right:58.59999999999991px;text-align:right;top:420.15px;font-size:14px;line-height:14px;color:#4a5568;font-weight:400;letter-spacing:0.4px;">93.18%<span style="display:inline-block;width:6.5px"></span><span style="color:#4a5568">(</span><span style="color:#2f9e6e">87.3%</span><svg width="9.5" height="12" viewBox="0 0 9.5 12" style="vertical-align:-1.5px"><path d="M4.75,1.3 L4.75,11.9 M1,5.1 L4.75,1.3 L8.5,5.1" fill="none" stroke="#2f9e6e" stroke-width="1.2"/></svg><span style="color:#4a5568">)</span></div>
<div class="a" style="left:39px;top:460px;width:18px;height:18px;border:1.2px solid #54708f;border-radius:3.6px;box-sizing:content-box"></div>
<svg class="a" style="left:78px;top:460px" width="14" height="18" viewBox="0 0 14 18">
<path d="M3.3,4 L4.7,1.5 L9.8,1.5 L11.1,4Z" fill="#a9b6c6" stroke="#3d5470" stroke-width="1.3" stroke-linejoin="round"/>
<path d="M0.6,4.3 L13.6,4.3" stroke="#3d5470" stroke-width="1.5" stroke-linecap="round"/>
<path d="M1.9,4.6 L1.9,14.5 Q1.9,16 3.4,16 L11.3,16 Q12.8,16 12.8,14.5 L12.8,4.6" fill="none" stroke="#3d5470" stroke-width="1.4"/>
<path d="M4.4,6.3 L4.4,13.6 M9.5,6.3 L9.5,13.6" stroke="#3d5470" stroke-width="1.1" stroke-linecap="round"/>
<path d="M7,6.4 L7,13.6" stroke="#a9b6c6" stroke-width="1.2"/>
</svg>
<div class="t" style="left:113.5px;top:461.15px;font-size:14px;line-height:14px;color:#1a202c;font-weight:700;letter-spacing:-0.25px;">gut support ...</div>
<svg class="a" style="left:213px;top:461px" width="17" height="17" viewBox="0 0 17 17">
<path d="M6.5,2.15 L3.3,2.15 Q1.45,2.15 1.45,4 L1.45,12.8 Q1.45,14.65 3.3,14.65 L11.7,14.65 Q13.55,14.65 13.55,12.8 L13.55,9.5" fill="none" stroke="#3d5470" stroke-width="1.5" stroke-linecap="round"/>
<path d="M9.9,1.05 L14.85,1.05 L14.85,6 M14.6,1.3 L6.8,9.0" fill="none" stroke="#3d5470" stroke-width="1.5" stroke-linecap="round"/>
</svg>
<div class="t" style="right:1122.6px;text-align:right;top:461.15px;font-size:14px;line-height:14px;color:#4a5568;font-weight:400;letter-spacing:0.4px;">6,433<span style="display:inline-block;width:6.5px"></span><span style="color:#4a5568">(</span><span style="color:#2f9e6e">73%</span><svg width="9.5" height="12" viewBox="0 0 9.5 12" style="vertical-align:-1.5px"><path d="M4.75,1.3 L4.75,11.9 M1,5.1 L4.75,1.3 L8.5,5.1" fill="none" stroke="#2f9e6e" stroke-width="1.2"/></svg><span style="color:#4a5568">)</span></div>
<div class="t" style="left:589px;top:461.15px;font-size:14px;line-height:14px;color:#4a5568;font-weight:400;letter-spacing:0.4px;">N/A</div>
<div class="t" style="right:812.1px;text-align:right;top:461.15px;font-size:14px;line-height:14px;color:#4a5568;font-weight:400;letter-spacing:0.4px;">433</div>
<div class="t" style="right:626.1px;text-align:right;top:461.15px;font-size:14px;line-height:14px;color:#4a5568;font-weight:400;letter-spacing:0.4px;">241</div>
<div class="t" style="right:483.5999999999999px;text-align:right;top:461.15px;font-size:14px;line-height:14px;color:#4a5568;font-weight:400;letter-spacing:0.4px;">0</div>
<div class="t" style="left:1128.3px;top:461.95px;font-size:14px;line-height:14px;color:#4a5568;font-weight:400;letter-spacing:0.3px;"><span style="color:#2d3748">$1.43</span> <span style="word-spacing:-1px">($1.10 – $1.87)</span></div>
<svg class="a" style="left:1277px;top:462px" width="17" height="15" viewBox="0 0 17 15">
<path d="M0.7,0.6 L0.7,12.2 Q0.7,13.3 1.8,13.3 L15.6,13.3" fill="none" stroke="#3d5470" stroke-width="1.5" stroke-linecap="round"/>
<path d="M3.7,8.2 L6.9,4.8 L9.9,7.6 L14.5,3.4" fill="none" stroke="#3d5470" stroke-width="1.5" stroke-linecap="round" stroke-linejoin="round"/>
</svg>
<div class="t" style="right:58.59999999999991px;text-align:right;top:461.15px;font-size:14px;line-height:14px;color:#4a5568;font-weight:400;letter-spacing:0.4px;">63.87%<span style="display:inline-block;width:6.5px"></span><span style="color:#4a5568">(</span><span style="color:#2f9e6e">84.64%</span><svg width="9.5" height="12" viewBox="0 0 9.5 12" style="vertical-align:-1.5px"><path d="M4.75,1.3 L4.75,11.9 M1,5.1 L4.75,1.3 L8.5,5.1" fill="none" stroke="#2f9e6e" stroke-width="1.2"/></svg><span style="color:#4a5568">)</span></div>
<div class="a" style="left:39px;top:501px;width:18px;height:18px;border:1.2px solid #54708f;border-radius:3.6px;box-sizing:content-box"></div>
<svg class="a" style="left:78px;top:501px" width="14" height="18" viewBox="0 0 14 18">
<path d="M3.3,4 L4.7,1.5 L9.8,1.5 L11.1,4Z" fill="#a9b6c6" stroke="#3d5470" stroke-width="1.3" stroke-linejoin="round"/>
<path d="M0.6,4.3 L13.6,4.3" stroke="#3d5470" stroke-width="1.5" stroke-linecap="round"/>
<path d="M1.9,4.6 L1.9,14.5 Q1.9,16 3.4,16 L11.3,16 Q12.8,16 12.8,14.5 L12.8,4.6" fill="none" stroke="#3d5470" stroke-width="1.4"/>
<path d="M4.4,6.3 L4.4,13.6 M9.5,6.3 L9.5,13.6" stroke="#3d5470" stroke-width="1.1" stroke-linecap="round"/>
<path d="M7,6.4 L7,13.6" stroke="#a9b6c6" stroke-width="1.2"/>
</svg>
<div class="t" style="left:113.5px;top:502.15px;font-size:14px;line-height:14px;color:#1a202c;font-weight:700;letter-spacing:-0.25px;">gut</div>
<svg class="a" style="left:143px;top:502px" width="17" height="17" viewBox="0 0 17 17">
<path d="M6.5,2.15 L3.3,2.15 Q1.45,2.15 1.45,4 L1.45,12.8 Q1.45,14.65 3.3,14.65 L11.7,14.65 Q13.55,14.65 13.55,12.8 L13.55,9.5" fill="none" stroke="#3d5470" stroke-width="1.5" stroke-linecap="round"/>
<path d="M9.9,1.05 L14.85,1.05 L14.85,6 M14.6,1.3 L6.8,9.0" fill="none" stroke="#3d5470" stroke-width="1.5" stroke-linecap="round"/>
</svg>
<div class="t" style="right:1122.6px;text-align:right;top:502.15px;font-size:14px;line-height:14px;color:#4a5568;font-weight:400;letter-spacing:0.4px;">5,680<span style="display:inline-block;width:6.5px"></span><span style="color:#4a5568">(</span><span style="color:#2f9e6e">90%</span><svg width="9.5" height="12" viewBox="0 0 9.5 12" style="vertical-align:-1.5px"><path d="M4.75,1.3 L4.75,11.9 M1,5.1 L4.75,1.3 L8.5,5.1" fill="none" stroke="#2f9e6e" stroke-width="1.2"/></svg><span style="color:#4a5568">)</span></div>
<div class="t" style="left:589px;top:502.15px;font-size:14px;line-height:14px;color:#4a5568;font-weight:400;letter-spacing:0.4px;">N/A</div>
<div class="t" style="right:812.1px;text-align:right;top:502.15px;font-size:14px;line-height:14px;color:#4a5568;font-weight:400;letter-spacing:0.4px;">32</div>
<div class="t" style="right:626.1px;text-align:right;top:502.15px;font-size:14px;line-height:14px;color:#4a5568;font-weight:400;letter-spacing:0.4px;">&gt;50,000</div>
<div class="t" style="right:483.5999999999999px;text-align:right;top:502.15px;font-size:14px;line-height:14px;color:#4a5568;font-weight:400;letter-spacing:0.4px;">43</div>
<div class="t" style="left:1128.3px;top:502.95px;font-size:14px;line-height:14px;color:#4a5568;font-weight:400;letter-spacing:0.3px;"><span style="color:#2d3748">$2.19</span> <span style="word-spacing:-1px">($1.49 – $2.58)</span></div>
<svg class="a" style="left:1277px;top:503px" width="17" height="15" viewBox="0 0 17 15">
<path d="M0.7,0.6 L0.7,12.2 Q0.7,13.3 1.8,13.3 L15.6,13.3" fill="none" stroke="#3d5470" stroke-width="1.5" stroke-linecap="round"/>
<path d="M3.7,8.2 L6.9,4.8 L9.9,7.6 L14.5,3.4" fill="none" stroke="#3d5470" stroke-width="1.5" stroke-linecap="round" stroke-linejoin="round"/>
</svg>
<div class="t" style="right:58.59999999999991px;text-align:right;top:502.15px;font-size:14px;line-height:14px;color:#4a5568;font-weight:400;letter-spacing:0.4px;">72.83%<span style="display:inline-block;width:6.5px"></span><span style="color:#4a5568">(</span><span style="color:#2f9e6e">32.09%</span><svg width="9.5" height="12" viewBox="0 0 9.5 12" style="vertical-align:-1.5px"><path d="M4.75,1.3 L4.75,11.9 M1,5.1 L4.75,1.3 L8.5,5.1" fill="none" stroke="#2f9e6e" stroke-width="1.2"/></svg><span style="color:#4a5568">)</span></div>
<div class="a" style="left:39px;top:542px;width:18px;height:18px;border:1.2px solid #54708f;border-radius:3.6px;box-sizing:content-box"></div>
<svg class="a" style="left:78px;top:542px" width="14" height="18" viewBox="0 0 14 18">
<path d="M3.3,4 L4.7,1.5 L9.8,1.5 L11.1,4Z" fill="#a9b6c6" stroke="#3d5470" stroke-width="1.3" stroke-linejoin="round"/>
<path d="M0.6,4.3 L13.6,4.3" stroke="#3d5470" stroke-width="1.5" stroke-linecap="round"/>
<path d="M1.9,4.6 L1.9,14.5 Q1.9,16 3.4,16 L11.3,16 Q12.8,16 12.8,14.5 L12.8,4.6" fill="none" stroke="#3d5470" stroke-width="1.4"/>
<path d="M4.4,6.3 L4.4,13.6 M9.5,6.3 L9.5,13.6" stroke="#3d5470" stroke-width="1.1" stroke-linecap="round"/>
<path d="M7,6.4 L7,13.6" stroke="#a9b6c6" stroke-width="1.2"/>
</svg>
<div class="t" style="left:113.5px;top:543.15px;font-size:14px;line-height:14px;color:#1a202c;font-weight:700;letter-spacing:-0.25px;">ion gut supp...</div>
<svg class="a" style="left:213px;top:543px" width="17" height="17" viewBox="0 0 17 17">
<path d="M6.5,2.15 L3.3,2.15 Q1.45,2.15 1.45,4 L1.45,12.8 Q1.45,14.65 3.3,14.65 L11.7,14.65 Q13.55,14.65 13.55,12.8 L13.55,9.5" fill="none" stroke="#3d5470" stroke-width="1.5" stroke-linecap="round"/>
<path d="M9.9,1.05 L14.85,1.05 L14.85,6 M14.6,1.3 L6.8,9.0" fill="none" stroke="#3d5470" stroke-width="1.5" stroke-linecap="round"/>
</svg>
<div class="t" style="right:1122.6px;text-align:right;top:543.15px;font-size:14px;line-height:14px;color:#4a5568;font-weight:400;letter-spacing:0.4px;">4,346<span style="display:inline-block;width:6.5px"></span><span style="color:#4a5568">(</span><span style="color:#2f9e6e">40%</span><svg width="9.5" height="12" viewBox="0 0 9.5 12" style="vertical-align:-1.5px"><path d="M4.75,1.3 L4.75,11.9 M1,5.1 L4.75,1.3 L8.5,5.1" fill="none" stroke="#2f9e6e" stroke-width="1.2"/></svg><span style="color:#4a5568">)</span></div>
<div class="t" style="left:589px;top:543.15px;font-size:14px;line-height:14px;color:#4a5568;font-weight:400;letter-spacing:0.4px;">N/A</div>
<div class="t" style="right:812.1px;text-align:right;top:543.15px;font-size:14px;line-height:14px;color:#4a5568;font-weight:400;letter-spacing:0.4px;">999</div>
<div class="t" style="right:626.1px;text-align:right;top:543.15px;font-size:14px;line-height:14px;color:#4a5568;font-weight:400;letter-spacing:0.4px;">79</div>
<div class="t" style="right:483.5999999999999px;text-align:right;top:543.15px;font-size:14px;line-height:14px;color:#4a5568;font-weight:400;letter-spacing:0.4px;">0</div>
<div class="t" style="left:1128.3px;top:543.95px;font-size:14px;line-height:14px;color:#4a5568;font-weight:400;letter-spacing:0.3px;"><span style="color:#2d3748">$2.60</span> <span style="word-spacing:-1px">($1.75 – $3.02)</span></div>
<svg class="a" style="left:1277px;top:544px" width="17" height="15" viewBox="0 0 17 15">
<path d="M0.7,0.6 L0.7,12.2 Q0.7,13.3 1.8,13.3 L15.6,13.3" fill="none" stroke="#3d5470" stroke-width="1.5" stroke-linecap="round"/>
<path d="M3.7,8.2 L6.9,4.8 L9.9,7.6 L14.5,3.4" fill="none" stroke="#3d5470" stroke-width="1.5" stroke-linecap="round" stroke-linejoin="round"/>
</svg>
<div class="t" style="right:58.59999999999991px;text-align:right;top:543.15px;font-size:14px;line-height:14px;color:#4a5568;font-weight:400;letter-spacing:0.4px;">87.09%<span style="display:inline-block;width:6.5px"></span><span style="color:#4a5568">(</span><span style="color:#2f9e6e">89.3%</span><svg width="9.5" height="12" viewBox="0 0 9.5 12" style="vertical-align:-1.5px"><path d="M4.75,1.3 L4.75,11.9 M1,5.1 L4.75,1.3 L8.5,5.1" fill="none" stroke="#2f9e6e" stroke-width="1.2"/></svg><span style="color:#4a5568">)</span></div>
<div class="a" style="left:39px;top:583px;width:18px;height:18px;border:1.2px solid #54708f;border-radius:3.6px;box-sizing:content-box"></div>
<svg class="a" style="left:78px;top:583px" width="14" height="18" viewBox="0 0 14 18">
<path d="M3.3,4 L4.7,1.5 L9.8,1.5 L11.1,4Z" fill="#a9b6c6" stroke="#3d5470" stroke-width="1.3" stroke-linejoin="round"/>
<path d="M0.6,4.3 L13.6,4.3" stroke="#3d5470" stroke-width="1.5" stroke-linecap="round"/>
<path d="M1.9,4.6 L1.9,14.5 Q1.9,16 3.4,16 L11.3,16 Q12.8,16 12.8,14.5 L12.8,4.6" fill="none" stroke="#3d5470" stroke-width="1.4"/>
<path d="M4.4,6.3 L4.4,13.6 M9.5,6.3 L9.5,13.6" stroke="#3d5470" stroke-width="1.1" stroke-linecap="round"/>
<path d="M7,6.4 L7,13.6" stroke="#a9b6c6" stroke-width="1.2"/>
</svg>
<div class="t" style="left:113.5px;top:584.15px;font-size:14px;line-height:14px;color:#1a202c;font-weight:700;letter-spacing:-0.25px;">gut health f...</div>
<svg class="a" style="left:213px;top:584px" width="17" height="17" viewBox="0 0 17 17">
<path d="M6.5,2.15 L3.3,2.15 Q1.45,2.15 1.45,4 L1.45,12.8 Q1.45,14.65 3.3,14.65 L11.7,14.65 Q13.55,14.65 13.55,12.8 L13.55,9.5" fill="none" stroke="#3d5470" stroke-width="1.5" stroke-linecap="round"/>
<path d="M9.9,1.05 L14.85,1.05 L14.85,6 M14.6,1.3 L6.8,9.0" fill="none" stroke="#3d5470" stroke-width="1.5" stroke-linecap="round"/>
</svg>
<div class="t" style="right:1122.6px;text-align:right;top:584.15px;font-size:14px;line-height:14px;color:#4a5568;font-weight:400;letter-spacing:0.4px;">4,346<span style="display:inline-block;width:6.5px"></span><span style="color:#4a5568">(</span><span style="color:#2f9e6e">4%</span><svg width="9.5" height="12" viewBox="0 0 9.5 12" style="vertical-align:-1.5px"><path d="M4.75,1.3 L4.75,11.9 M1,5.1 L4.75,1.3 L8.5,5.1" fill="none" stroke="#2f9e6e" stroke-width="1.2"/></svg><span style="color:#4a5568">)</span></div>
<div class="t" style="left:589px;top:584.15px;font-size:14px;line-height:14px;color:#4a5568;font-weight:400;letter-spacing:0.4px;">N/A</div>
<div class="t" style="right:812.1px;text-align:right;top:584.15px;font-size:14px;line-height:14px;color:#4a5568;font-weight:400;letter-spacing:0.4px;">260</div>
<div class="t" style="right:626.1px;text-align:right;top:584.15px;font-size:14px;line-height:14px;color:#4a5568;font-weight:400;letter-spacing:0.4px;">&gt;3,000</div>
<div class="t" style="right:483.5999999999999px;text-align:right;top:584.15px;font-size:14px;line-height:14px;color:#4a5568;font-weight:400;letter-spacing:0.4px;">1</div>
<div class="t" style="left:1128.3px;top:584.95px;font-size:14px;line-height:14px;color:#4a5568;font-weight:400;letter-spacing:0.3px;"><span style="color:#2d3748">$2.86</span> <span style="word-spacing:-1px">($1.97 – $3.80)</span></div>
<svg class="a" style="left:1277px;top:585px" width="17" height="15" viewBox="0 0 17 15">
<path d="M0.7,0.6 L0.7,12.2 Q0.7,13.3 1.8,13.3 L15.6,13.3" fill="none" stroke="#3d5470" stroke-width="1.5" stroke-linecap="round"/>
<path d="M3.7,8.2 L6.9,4.8 L9.9,7.6 L14.5,3.4" fill="none" stroke="#3d5470" stroke-width="1.5" stroke-linecap="round" stroke-linejoin="round"/>
</svg>
<div class="t" style="right:58.59999999999991px;text-align:right;top:584.15px;font-size:14px;line-height:14px;color:#4a5568;font-weight:400;letter-spacing:0.4px;">58.08%<span style="display:inline-block;width:6.5px"></span><span style="color:#4a5568">(</span><span style="color:#2f9e6e">55.81%</span><svg width="9.5" height="12" viewBox="0 0 9.5 12" style="vertical-align:-1.5px"><path d="M4.75,1.3 L4.75,11.9 M1,5.1 L4.75,1.3 L8.5,5.1" fill="none" stroke="#2f9e6e" stroke-width="1.2"/></svg><span style="color:#4a5568">)</span></div>
<svg class="a" style="left:0;top:0" width="1580" height="688" viewBox="0 0 1580 688"><g fill="none" stroke="#1a6fe6" stroke-width="1.8" stroke-linejoin="round" stroke-linecap="round"><path d="M272.2,222.3 L279.8,223.2 L286.9,221.1 L293.6,227.2 L300.6,223.5 L307.3,226.6 L315.0,223.8 L328.7,222.3 L335.7,216.2"/><path d="M513.7,229 C525,222 530,217 541,216.2 C552,217 560,222 568,222.9 C572,223.2 574,222.3 576.9,222"/><path d="M1320.7,218.3 L1334.4,216.8 L1341.4,218.6 L1348.1,216.8 L1369.5,216.8 L1377.1,219.8 L1383.8,219.8"/><path d="M280.8,261.0 L293.6,262.0 L315.0,261.4 L322.6,258.3 L336.3,257.0 L344.0,257.7"/><path d="M513.7,260.1 C525,257 530,256.7 541,256.7 C552,257 560,258.7 568,259.2 C572,259.3 574,258.7 576.9,258.6"/><path d="M1320.7,258.0 L1334.4,257.7 L1349.7,257.7 L1369.5,258.9 L1383.8,258.0"/><path d="M280.8,298.3 L287.5,301.6 L294.5,298.3 L301.2,305.3 L308.8,306.5 L322.6,305.6 L329.6,301.6 L336.3,300.4 L344.0,298.0"/><path d="M513.7,307.7 C525,302 530,299 541,298.2 C552,299 560,303 568,304.3 C572,304.5 574,303.5 576.9,303.4"/><path d="M1320.7,300.7 L1334.4,299.1 L1341.4,301.0 L1348.1,299.1 L1355.8,300.1 L1369.5,298.8 L1377.1,301.3 L1383.8,301.0"/><path d="M289.6,340.3 L300.0,340.6 L315.0,340.3 L330.0,339.9 L340.0,340.5 L353.1,340.3"/><path d="M513.7,343.3 L576.9,343.3"/><path d="M1320.7,342.2 L1328.3,342.2 L1341.4,340.3 L1349.7,342.8 L1369.5,341.5 L1383.8,342.5"/><path d="M280.8,382.5 L293.6,384.7 L301.2,384.7 L308.8,382.8 L315.0,382.5 L322.6,380.7 L329.6,383.5 L336.3,383.2 L344.0,380.7"/><path d="M513.7,380.8 C525,380 530,379.9 541,379.9 C552,380 560,381.5 568,381.5 C572,381.3 574,380.5 576.9,380.2"/><path d="M1320.7,382.4 L1334.4,382.7 L1341.4,381.5 L1355.8,382.1 L1369.5,382.7 L1383.8,382.7"/><path d="M280.8,434.9 L287.5,434.6 L294.5,431.0 L301.2,434.6 L308.8,434.9 L322.6,434.9 L329.6,433.4 L336.3,429.4 L344.0,421.2"/><path d="M513.7,425.7 L576.9,425.7"/><path d="M1328.9,422.1 L1335.9,421.8 L1342.9,423.6 L1355.8,423.3 L1364.9,422.4 L1377.1,423.6 L1391.8,422.4"/><path d="M289.6,468.2 L296.6,471.2 L303.6,468.8 L310.4,473.1 L318.0,469.7 L324.7,471.5 L331.7,467.9 L338.8,468.8 L345.5,467.0 L353.1,462.1"/><path d="M513.7,466.9 L576.9,466.9"/><path d="M1320.7,464.5 L1334.4,462.7 L1341.4,463.9 L1348.1,463.0 L1364.9,462.4 L1371.0,463.0 L1383.8,466.6"/><path d="M289.6,514.0 L310.4,514.3 L331.7,514.0 L345.5,513.4 L353.1,503.6"/><path d="M513.7,507.8 L576.9,507.8"/><path d="M1320.7,511.2 L1328.3,511.2 L1334.4,512.4 L1341.4,510.5 L1363.4,510.2 L1377.1,510.9 L1383.8,504.1"/><path d="M289.6,553.4 L310.4,553.4 L318.0,550.0 L324.7,552.4 L331.7,544.2 L338.8,550.3 L345.5,550.9 L353.1,553.0"/><path d="M513.7,548.3 L576.9,548.3"/><path d="M1328.9,545.3 L1349.7,545.3 L1360.3,545.9 L1371.0,544.7 L1391.8,545.9"/><path d="M297.5,589.0 L318.0,588.5 L325.6,586.0 L333.3,586.9 L340.0,585.4 L347.0,586.9 L354.6,588.5 L360.7,588.5"/><path d="M513.7,589.5 L576.9,589.5"/><path d="M1320.7,587.4 L1326.8,588.9 L1334.4,587.1 L1349.7,585.9 L1363.4,587.1 L1374.1,586.2 L1383.8,586.8"/></g></svg>
<div class="a" style="left:29px;top:616px;width:1309px;height:6px;border-radius:3px;background:#a3b2c5"></div>
<div class="a" style="left:25px;top:626px;width:1512px;height:1px;background:#d8dfe7"></div>
<svg class="a" style="left:673px;top:658px" width="13" height="20" viewBox="0 0 13 20"><path d="M10.5,1.5 L2.5,10 L10.5,18.5" fill="none" stroke="#a0adbd" stroke-width="1.8"/></svg>
<div class="a" style="left:705px;top:652px;width:32px;height:32px;border-radius:6px;background:#475b74"></div>
<div class="a" style="left:745px;top:652px;width:32px;height:32px;border-radius:6px;background:#eef0f5"></div>
<div class="a" style="left:825px;top:652px;width:32px;height:32px;border-radius:6px;background:#eef0f5"></div>
<svg class="a" style="left:876px;top:658px" width="13" height="20" viewBox="0 0 13 20"><path d="M2.5,1.5 L10.5,10 L2.5,18.5" fill="none" stroke="#3d5470" stroke-width="1.8"/></svg>
<div class="t" style="left:705px;top:652px;width:32px;height:32px;line-height:32px;text-align:center;font-size:14px;font-weight:700;color:#fff">1</div>
<div class="t" style="left:745px;top:652px;width:32px;height:32px;line-height:32px;text-align:center;font-size:14px;font-weight:700;color:#3d4f66">2</div>
<div class="t" style="left:825px;top:652px;width:32px;height:32px;line-height:32px;text-align:center;font-size:14px;font-weight:700;color:#3d4f66">5</div>
<div class="t" style="left:795.5px;top:662.00px;font-size:13px;line-height:13px;color:#3d4f66;font-weight:400;">...</div>
<div class="t" style="left:1337.3px;top:660.25px;font-size:14px;line-height:14px;color:#4a5568;font-weight:400;letter-spacing:0.08px;">Rows per page:</div>
<div class="a" style="left:1443px;top:652px;width:58px;height:30px;border:1px solid #4a6380;border-radius:6px"></div>
<div class="t" style="left:1453px;top:660.38px;font-size:15.5px;line-height:15.5px;color:#3d4f66;font-weight:400;">10</div>
<svg class="a" style="left:1480px;top:663px" width="14" height="9" viewBox="0 0 14 9"><path d="M1.5,1.5 L7,7 L12.5,1.5" fill="none" stroke="#2d3748" stroke-width="1.6"/></svg>
</body></html>
